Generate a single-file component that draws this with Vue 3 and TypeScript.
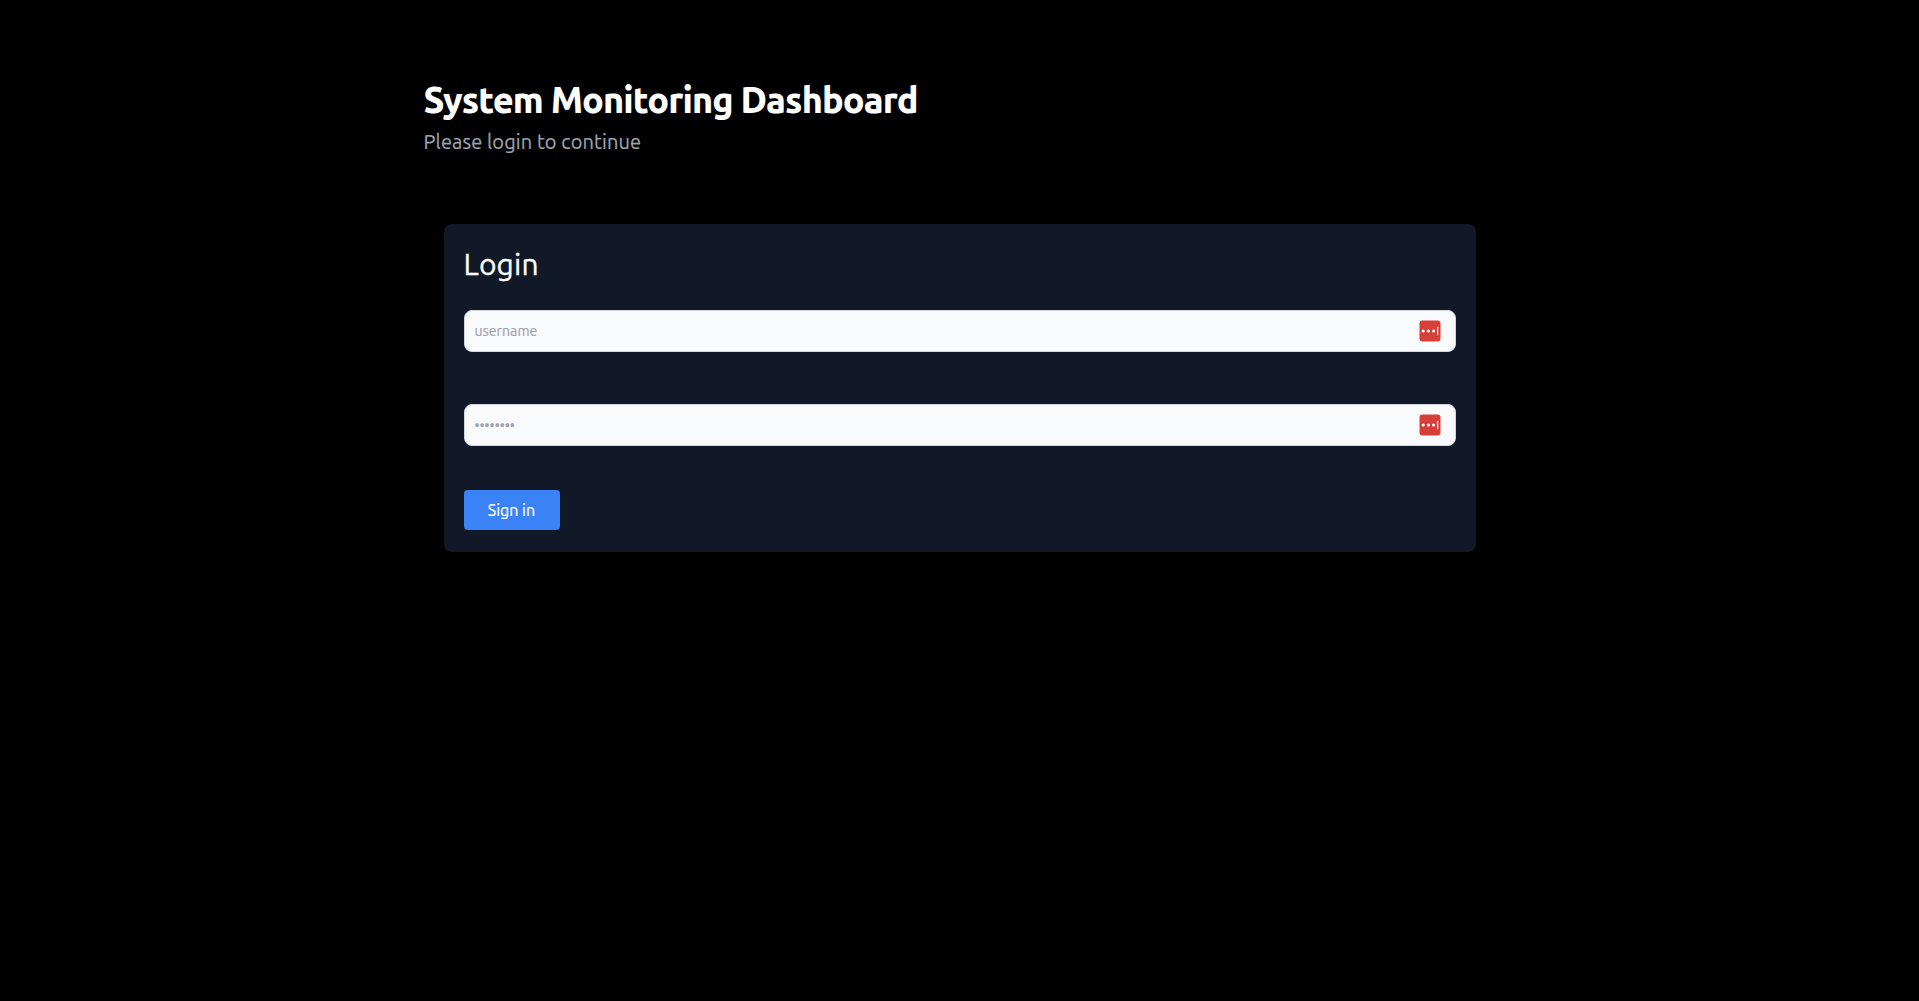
<script setup lang="ts">
import { ref } from 'vue'

interface Field {
  name: string
  type: string
  placeholder: string
}

const fields: Field[] = [
  { name: 'username', type: 'text', placeholder: 'username' },
  { name: 'password', type: 'password', placeholder: '••••••••' },
]
const values = ref<Record<string, string>>({ username: '', password: '' })
</script>

<template>
  <main class="page">
    <header class="heading">
      <h1>System Monitoring Dashboard</h1>
      <p>Please login to continue</p>
    </header>
    <form class="card" @submit.prevent>
      <h2>Login</h2>
      <div v-for="field in fields" :key="field.name" class="field">
        <input
          v-model="values[field.name]"
          :class="field.name"
          :type="field.type"
          :placeholder="field.placeholder"
          :aria-label="field.name"
        />
        <svg class="vault" viewBox="0 0 22 22" aria-hidden="true">
          <rect x="0.5" y="0.5" width="21" height="21" rx="3" fill="#d63f3a" />
          <g fill="#fff">
            <circle cx="4.2" cy="11" r="1.6" />
            <circle cx="9.4" cy="11" r="1.6" />
            <circle cx="14.6" cy="11" r="1.6" />
            <rect x="18" y="6.8" width="1.2" height="8.4" rx="0.4" />
          </g>
        </svg>
      </div>
      <button type="submit">Sign in</button>
    </form>
  </main>
</template>

<style>
body {
  background: #000;
}
</style>

<style scoped>
.page {
  box-sizing: border-box;
  width: 1072px;
  min-height: 1001px;
  margin: 0 auto;
  padding-top: 80px;
  font-family: Ubuntu, "Noto Sans", sans-serif;
  color: #fff;
}
h1,
h2,
p {
  margin: 0;
}
h1 {
  font-size: 36px;
  line-height: 40px;
  font-weight: 800;
  letter-spacing: -0.025em;
}
p {
  margin-top: 8px;
  font-size: 20px;
  line-height: 28px;
  font-weight: 400;
  color: #9ca3af;
  letter-spacing: 0.1px;
  -webkit-text-stroke: 0.2px #9ca3af;
}
.card {
  box-sizing: border-box;
  height: 328px;
  margin: 68px 20px 0;
  padding: 20px;
  border-radius: 8px;
  background: #111827;
}
h2 {
  margin-bottom: 26px;
  font-size: 30px;
  line-height: 40px;
  font-weight: 400;
  letter-spacing: 0.15px;
  -webkit-text-stroke: 0.3px #fff;
}
.field {
  position: relative;
  height: 42px;
  margin-bottom: 52px;
}
input {
  box-sizing: border-box;
  display: block;
  width: 100%;
  height: 42px;
  padding: 10px;
  border: 1px solid #d1d5db;
  border-radius: 8px;
  background: #f9fafb;
  color: #111827;
  font: 14px/20px Ubuntu, "Noto Sans", sans-serif;
}
.username {
  letter-spacing: 0.1px;
}
input::placeholder {
  color: #9ca3af;
  opacity: 1;
  -webkit-text-stroke: 0.2px #9ca3af;
}
.vault {
  position: absolute;
  top: 10px;
  right: 14.5px;
  width: 22px;
  height: 22px;
}
button {
  display: block;
  width: 96px;
  height: 40px;
  margin-top: -8px;
  padding: 0;
  border: 0;
  border-radius: 4px;
  background: #3b82f6;
  color: #fff;
  font: 16px/24px Ubuntu, "Noto Sans", sans-serif;
  -webkit-text-stroke: 0.2px #fff;
}
</style>
